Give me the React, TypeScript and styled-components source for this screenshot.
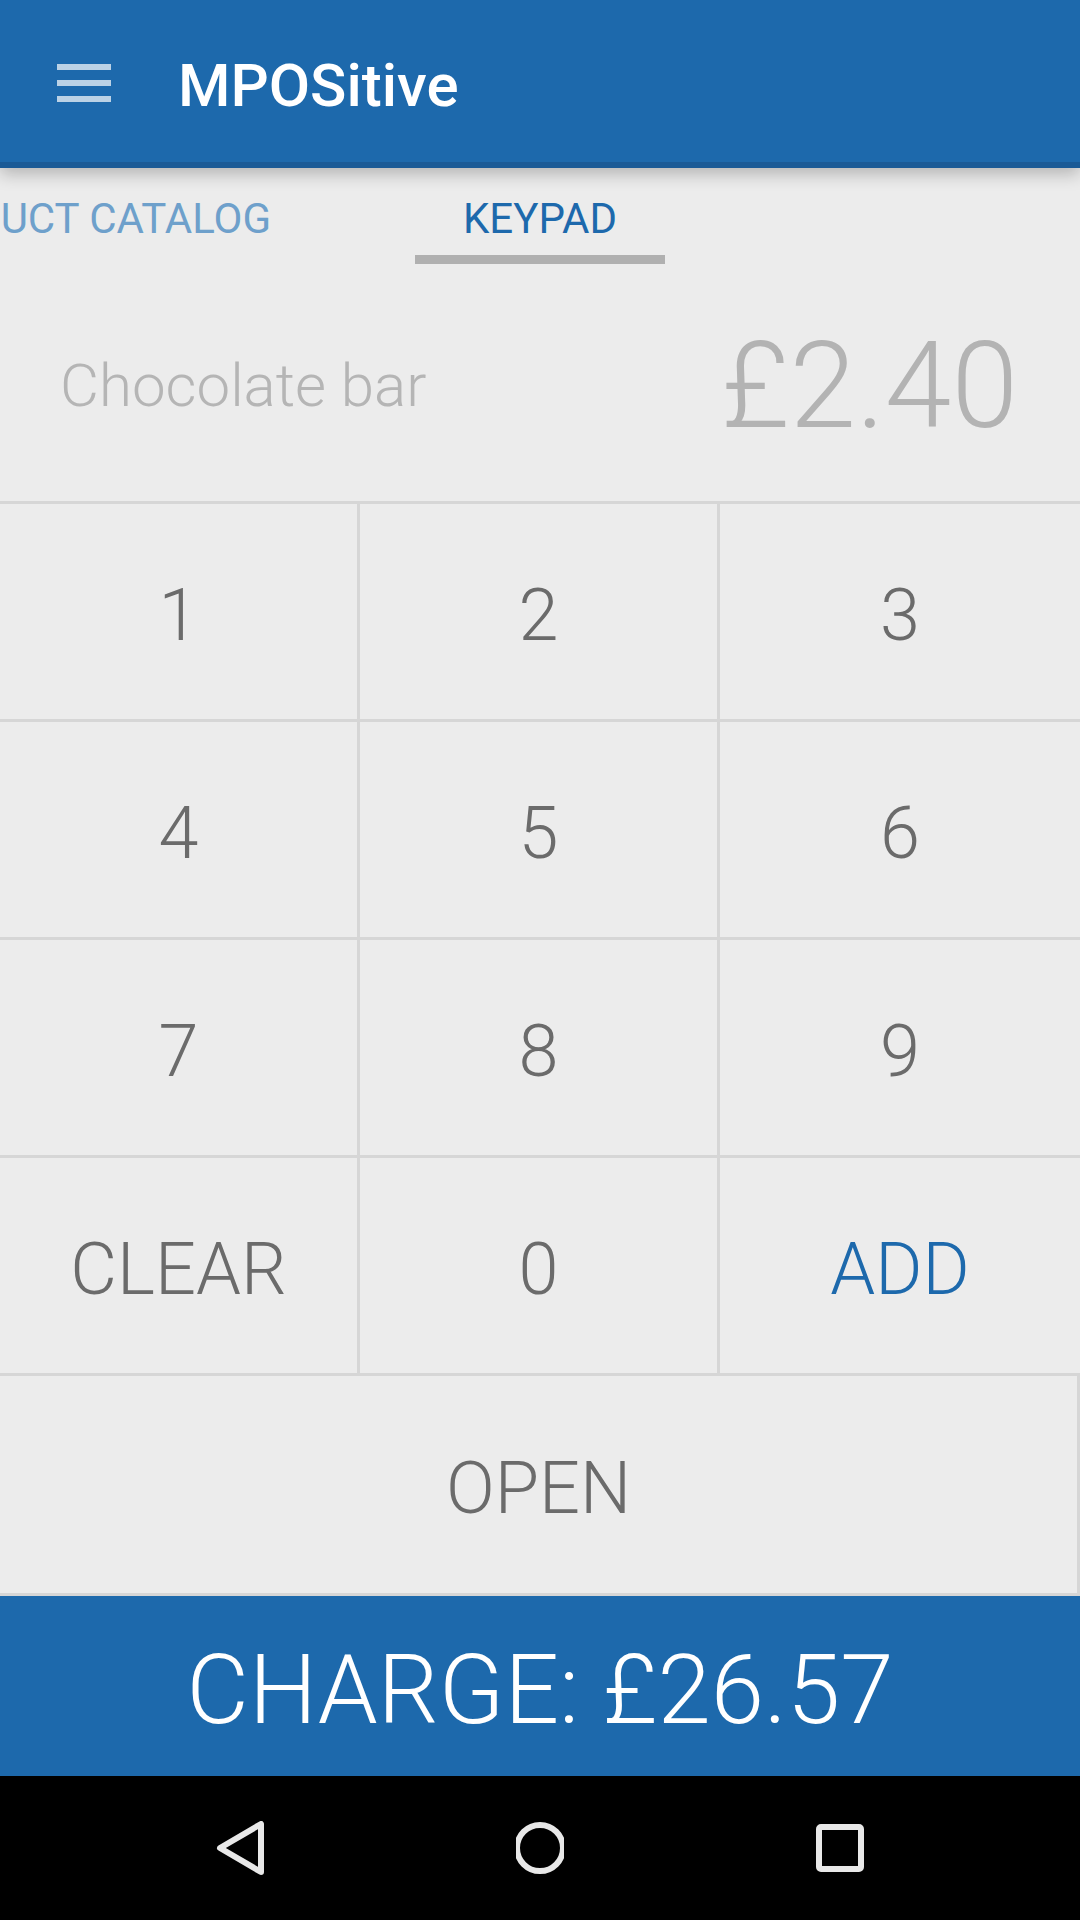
import React from "react";
import styled, { createGlobalStyle } from "styled-components";

const BLUE = "#1D69AC";
const LINE = "#D6D6D6";

const GlobalStyle = createGlobalStyle`
  html, body { margin: 0; padding: 0; background: #ECECEC; }
  body { font-family: Roboto, "Noto Sans", "Liberation Sans", sans-serif; }
  * { box-sizing: border-box; }
`;

const Screen = styled.div`
  width: 1080px;
  height: 1920px;
  display: flex;
  flex-direction: column;
  overflow: hidden;
  background: #ececec;
`;

const AppBar = styled.header`
  position: relative;
  z-index: 2;
  flex: 0 0 168px;
  display: flex;
  align-items: center;
  padding: 3px 0 0 57px;
  background: ${BLUE};
  border-bottom: 6px solid #1a5a96;
  box-shadow: 0 6px 16px rgba(0, 0, 0, 0.24);
`;

const MenuIcon = styled.svg`
  flex: 0 0 auto;
  display: block;
`;

const Title = styled.h1`
  margin: 0 0 0 67px;
  padding-top: 6px;
  font-size: 60px;
  font-weight: 500;
  color: #ffffff;
  letter-spacing: 0;
`;

const TabBar = styled.nav`
  flex: 0 0 96px;
  display: flex;
  overflow: hidden;
`;

const Tab = styled.div<{ $width: number }>`
  flex: 0 0 ${(p) => p.$width}px;
  min-width: 0;
  display: flex;
  flex-direction: column;
  padding-top: 29px;
`;

const TabLabel = styled.div<{ $active?: boolean; $align: "end" | "center" }>`
  height: 44px;
  display: flex;
  justify-content: ${(p) => (p.$align === "end" ? "flex-end" : "center")};
  padding-right: ${(p) => (p.$align === "end" ? "144px" : "0")};
  white-space: nowrap;
  font-size: 42px;
  line-height: 44px;
  font-weight: 400;
  color: ${(p) => (p.$active ? BLUE : "#6EA0CB")};
`;

const TabIndicator = styled.div<{ $active?: boolean }>`
  margin-top: 14px;
  height: 9px;
  background: ${(p) => (p.$active ? "#B0B0B0" : "transparent")};
`;

const Display = styled.section`
  flex: 0 0 237px;
  display: flex;
  align-items: center;
  justify-content: space-between;
  padding: 6px 62px 0 60px;
`;

const ItemName = styled.span`
  font-size: 60px;
  font-weight: 300;
  color: #b5b5b5;
`;

const Amount = styled.span`
  font-size: 120px;
  font-weight: 300;
  color: #b3b3b3;
`;

const Keypad = styled.div`
  flex: 0 0 auto;
  display: grid;
  grid-template-columns: 360px 360px 360px;
  grid-template-rows: repeat(4, 218px) 220px;
  border-top: 3px solid ${LINE};
`;

const Key = styled.button<{ $accent?: boolean; $edge?: boolean; $wide?: boolean }>`
  margin: 0;
  padding: 7px 0 0 0;
  background: transparent;
  border: 0;
  border-right: ${(p) => (p.$edge ? "0" : `3px solid ${LINE}`)};
  border-bottom: 3px solid ${LINE};
  grid-column: ${(p) => (p.$wide ? "1 / span 3" : "auto")};
  display: flex;
  align-items: center;
  justify-content: center;
  font-family: inherit;
  font-size: 72px;
  font-weight: 300;
  color: ${(p) => (p.$accent ? BLUE : "#6B6B6B")};
  cursor: pointer;
`;

const ChargeBar = styled.button`
  flex: 0 0 180px;
  margin: 0;
  padding: 7px 0 0 0;
  border: 0;
  background: ${BLUE};
  color: #ffffff;
  display: flex;
  align-items: center;
  justify-content: center;
  font-family: inherit;
  font-size: 96px;
  font-weight: 300;
  cursor: pointer;
`;

const NavBar = styled.nav`
  flex: 0 0 144px;
  background: #000000;
  display: flex;
  align-items: center;
  justify-content: center;
  gap: 252px;
`;

const NavIcon = styled.svg`
  display: block;
  flex: 0 0 auto;
`;

const NAV_COLOR = "#E8E8E8";

const keys: { label: string; accent?: boolean }[] = [
  { label: "1" },
  { label: "2" },
  { label: "3" },
  { label: "4" },
  { label: "5" },
  { label: "6" },
  { label: "7" },
  { label: "8" },
  { label: "9" },
  { label: "CLEAR" },
  { label: "0" },
  { label: "ADD", accent: true },
];

export default function App() {
  return (
    <>
      <GlobalStyle />
      <Screen>
        <AppBar>
          <MenuIcon width="54" height="38" viewBox="0 0 54 38">
            <rect x="0" y="0" width="54" height="6" fill="rgba(255,255,255,0.7)" />
            <rect x="0" y="16" width="54" height="6" fill="rgba(255,255,255,0.7)" />
            <rect x="0" y="32" width="54" height="6" fill="rgba(255,255,255,0.7)" />
          </MenuIcon>
          <Title>MPOSitive</Title>
        </AppBar>

        <TabBar>
          <Tab $width={415}>
            <TabLabel $align="end">PRODUCT CATALOG</TabLabel>
            <TabIndicator />
          </Tab>
          <Tab $width={250}>
            <TabLabel $align="center" $active>
              KEYPAD
            </TabLabel>
            <TabIndicator $active />
          </Tab>
        </TabBar>

        <Display>
          <ItemName>Chocolate bar</ItemName>
          <Amount>£2.40</Amount>
        </Display>

        <Keypad>
          {keys.map((k, i) => (
            <Key key={k.label} $accent={k.accent} $edge={i % 3 === 2}>
              {k.label}
            </Key>
          ))}
          <Key $wide>OPEN</Key>
        </Keypad>

        <ChargeBar>CHARGE: £26.57</ChargeBar>

        <NavBar>
          <NavIcon width="48" height="54" viewBox="0 0 48 54">
            <polygon
              points="4,27 45,3 45,51"
              fill="none"
              stroke={NAV_COLOR}
              strokeWidth="6"
              strokeLinejoin="round"
            />
          </NavIcon>
          <NavIcon width="48" height="52" viewBox="0 0 48 52">
            <circle cx="24" cy="26" r="23" fill="none" stroke={NAV_COLOR} strokeWidth="6" />
          </NavIcon>
          <NavIcon width="48" height="48" viewBox="0 0 48 48">
            <rect x="3" y="3" width="42" height="42" rx="2" fill="none" stroke={NAV_COLOR} strokeWidth="6" />
          </NavIcon>
        </NavBar>
      </Screen>
    </>
  );
}
